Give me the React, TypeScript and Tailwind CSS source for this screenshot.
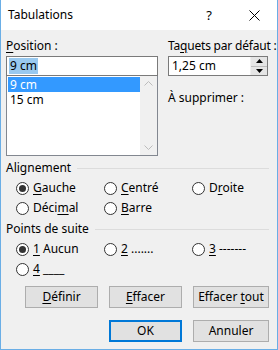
import React from 'react';

const font = { fontFamily: '"Segoe UI", "Noto Sans", sans-serif' };

function U({ children }: { children: React.ReactNode }) {
  return <span className="underline underline-offset-2 decoration-1">{children}</span>;
}

function Radio({ checked, children }: { checked?: boolean; children: React.ReactNode }) {
  return (
    <div className="flex items-center gap-[4px] h-[20px]">
      <span className="w-[13px] h-[13px] rounded-full border border-[#333] bg-white flex items-center justify-center">
        {checked ? <span className="w-[7px] h-[7px] rounded-full bg-[#333]" /> : null}
      </span>
      <span className="whitespace-nowrap">{children}</span>
    </div>
  );
}

function GroupTitle({ title }: { title: string }) {
  return (
    <div className="flex items-center gap-[6px] h-[16px]">
      <span>{title}</span>
      <span className="flex-1 h-px bg-[#dcdcdc]" />
    </div>
  );
}

function Btn({ children, w, primary }: { children: React.ReactNode; w: string; primary?: boolean }) {
  return (
    <div
      className={
        'h-[22px] flex items-center justify-center bg-[#e1e1e1] ' +
        w +
        ' ' +
        (primary ? 'border-2 border-[#0078d7]' : 'border border-[#adadad]')
      }
    >
      <span className="whitespace-nowrap">{children}</span>
    </div>
  );
}

export default function App() {
  return (
    <div
      className="w-[278px] h-[350px] flex flex-col bg-[#f0f0f0] border-x border-b border-[#6aaee6] text-[12px] text-black leading-none"
      style={font}
    >
      <div className="h-[30px] bg-white flex items-center pl-[7px] shrink-0">
        <span className="text-[12px]">Tabulations</span>
        <span className="ml-auto mr-[37px] text-[13px]">?</span>
        <svg width="11" height="11" viewBox="0 0 11 11" className="mr-[17px]">
          <path d="M0.5 0.5 L10.5 10.5 M10.5 0.5 L0.5 10.5" stroke="#000" strokeWidth="1" />
        </svg>
      </div>

      <div className="flex-1 flex flex-col px-[5px] pt-[8px]">
        <div className="flex gap-[10px]">
          <div className="w-[152px] flex flex-col">
            <div className="h-[16px] leading-[16px] whitespace-nowrap">
              <U>P</U>osition :
            </div>
            <div className="mt-[2px] h-[20px] border border-[#7a7a7a] bg-white flex items-center px-[2px]">
              <span className="bg-[#99c9ef] px-[1px] h-[16px] flex items-center">9 cm</span>
            </div>
            <div className="h-[80px] border border-t-0 border-[#828790] bg-white flex">
              <div className="flex-1 flex flex-col pt-[1px] pl-[1px]">
                <div className="h-[15px] leading-[15px] bg-[#3399ff] text-white pl-[2px]">9 cm</div>
                <div className="h-[15px] leading-[15px] pl-[2px]">15 cm</div>
              </div>
              <div className="w-[17px] bg-[#f0f0f0] flex flex-col items-center justify-between py-[5px]">
                <svg width="9" height="5" viewBox="0 0 9 5">
                  <path d="M0.5 4.5 L4.5 0.5 L8.5 4.5" fill="none" stroke="#bcbcbc" />
                </svg>
                <svg width="9" height="5" viewBox="0 0 9 5">
                  <path d="M0.5 0.5 L4.5 4.5 L8.5 0.5" fill="none" stroke="#bcbcbc" />
                </svg>
              </div>
            </div>
          </div>

          <div className="flex-1 min-w-0 flex flex-col pr-[4px]">
            <div className="h-[16px] leading-[16px] whitespace-nowrap tracking-[-0.2px]">
              Ta<U>q</U>uets par défaut :
            </div>
            <div className="mt-[2px] h-[20px] border border-[#7a7a7a] bg-white flex">
              <span className="flex-1 flex items-center pl-[3px]">1,25 cm</span>
              <div className="w-[17px] flex flex-col border-l border-[#f0f0f0]">
                <div className="flex-1 bg-[#e5e5e5] border-b border-[#bdbdbd] flex items-center justify-center">
                  <svg width="7" height="4" viewBox="0 0 7 4">
                    <path d="M0 4 L3.5 0 L7 4 Z" fill="#000" />
                  </svg>
                </div>
                <div className="flex-1 bg-[#e5e5e5] flex items-center justify-center">
                  <svg width="7" height="4" viewBox="0 0 7 4">
                    <path d="M0 0 L3.5 4 L7 0 Z" fill="#000" />
                  </svg>
                </div>
              </div>
            </div>
            <div className="mt-[14px] h-[16px] leading-[16px] whitespace-nowrap">À supprimer :</div>
          </div>
        </div>

        <div className="mt-[4px] pr-[3px]">
          <GroupTitle title="Alignement" />
          <div className="grid grid-cols-[88px_88px_1fr] pl-[10px] mt-[2px]">
            <Radio checked>
              <U>G</U>auche
            </Radio>
            <Radio>
              <U>C</U>entré
            </Radio>
            <Radio>
              D<U>r</U>oite
            </Radio>
            <Radio>
              Déci<U>m</U>al
            </Radio>
            <Radio>
              <U>B</U>arre
            </Radio>
          </div>
        </div>

        <div className="mt-[3px] pr-[3px]">
          <GroupTitle title="Points de suite" />
          <div className="grid grid-cols-[88px_88px_1fr] pl-[10px] mt-[2px]">
            <Radio checked>
              <U>1</U> Aucun
            </Radio>
            <Radio>
              <U>2</U> .......
            </Radio>
            <Radio>
              <U>3</U> -------
            </Radio>
            <Radio>
              <U>4</U> ____
            </Radio>
          </div>
        </div>

        <div className="mt-[7px] flex justify-end gap-[11px] pr-[3px]">
          <Btn w="w-[73px]">
            <U>D</U>éfinir
          </Btn>
          <Btn w="w-[73px]">
            <U>E</U>ffacer
          </Btn>
          <Btn w="w-[76px]">
            Effacer <U>t</U>out
          </Btn>
        </div>
        <div className="mt-[12px] flex justify-end gap-[11px] pr-[3px]">
          <Btn w="w-[73px]" primary>
            OK
          </Btn>
          <Btn w="w-[76px]">Annuler</Btn>
        </div>
      </div>
    </div>
  );
}
